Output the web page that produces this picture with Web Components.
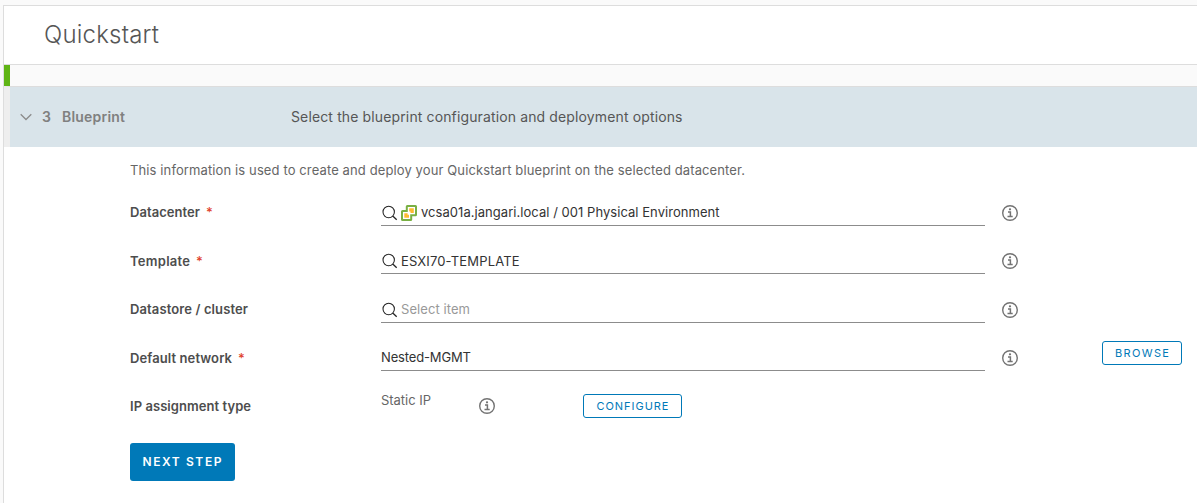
<!DOCTYPE html>
<html lang="en"><head><meta charset="utf-8"><title>Quickstart</title>
<style>
html,body{margin:0;height:100%;overflow:hidden}
body{background:#fafafa;font:13px/20px Inter,"Open Sans",sans-serif;color:#565656}
</style></head><body><quickstart-page></quickstart-page>
<script>
const define=(name,html,setup)=>customElements.define(name,class extends HTMLElement{
  connectedCallback(){
    if(this.shadowRoot)return;
    this.attachShadow({mode:'open'}).innerHTML=html;
    if(setup)setup.call(this,this.shadowRoot);
  }
});

// A line of text tracked out to the width in its "w" attribute.
define('fit-text',`<style>:host{display:inline-block;white-space:pre}span{display:inline-block}</style><span><slot></slot></span>`,function(root){
  const s=root.querySelector('span'),n=this.textContent.length,w=+this.getAttribute('w');
  s.style.letterSpacing='0px';
  const d=(w-s.getBoundingClientRect().width)/(n-1);
  s.style.letterSpacing=d.toFixed(3)+'px';
  s.style.marginRight=(-d).toFixed(3)+'px';
});

define('info-icon',`<style>:host{display:block;width:16px;height:16px}svg{display:block}</style>
<svg width="16" height="16" viewBox="0 0 16 16" fill="none" stroke="#737373"><circle cx="8" cy="8" r="7.3" stroke-width="1.4"/><path d="M6 7h2.400v4.500M5.500 11.600h5.200" stroke-width="1.500"/><circle cx="8" cy="4.300" r="1.150" fill="#737373" stroke="none"/></svg>`);

define('search-icon',`<style>:host{display:block;width:16px;height:16px;flex:none}svg{display:block}</style>
<svg width="16" height="16" viewBox="0 0 16 16" fill="none" stroke="#222"><circle cx="6.700" cy="7" r="5.700" stroke-width="1.050"/><path d="M11 11.300l3.700 3.500" stroke-width="1.300"/></svg>`);

define('vcenter-icon',`<style>:host{display:block;width:16px;height:16px;flex:none}svg{display:block}</style>
<svg width="16" height="16" viewBox="0 0 16 16"><path d="M6.300 0h8.200A1.500 1.500 0 0 1 16 1.500v8.200a1.500 1.500 0 0 1-1.500 1.500H11.200v3.300a1.500 1.500 0 0 1-1.500 1.500H1.500A1.500 1.500 0 0 1 0 14.500V6.500A1.500 1.500 0 0 1 1.500 5h3.300V1.500A1.500 1.500 0 0 1 6.300 0z" fill="#79b043"/><path d="M6.800 2H14V9.200H9.200V14H2V7h4.800z" fill="#fff"/><path d="M8.200 3.300H12.800v4.700H9.500V6.600H8.200zM3.300 8.300H6.600v1.400H8v3H3.300z" fill="#fdbb30"/></svg>`);

define('step-header',`<style>
:host{display:flex;height:61px;box-sizing:border-box;border-top:1px solid #ddd;border-left:6px solid #eee;background:#d9e4ea;align-items:center;font-size:14px}
svg{margin-left:10px;width:12px;height:8px;display:block}
.n{width:20px;margin-left:10px;font-weight:600;color:#808080}.t{width:229px;font-weight:600;color:#808080}.d{color:#565656}
</style><svg viewBox="0 0 12 8" fill="none" stroke="#8c8c8c" stroke-width="1.300"><path d="M.7 1.200 6 6.500 11.300 1.200"/></svg>
<span class="n"><slot name="number"></slot></span><span class="t"><slot name="title"></slot></span><span class="d"><slot></slot></span>`);

define('form-row',`<style>
:host{display:grid;grid-template-columns:251px 604px 16px 80px;column-gap:0;height:48px;align-items:start}
.label{font-weight:600;color:#4d4d4d;display:flex;gap:6px;padding-top:var(--label-y,0)}
.star{color:#e0412b;font-weight:500;display:none}:host([required]) .star{display:block}
.control{height:23px;border-bottom:1px solid #8c8c8c;display:flex;align-items:start;gap:4px;color:#333}
:host([placeholder]) .control{color:#999}
:host([plain]) .control{border:0;color:#666}
.info{margin:3px 0 0 17px}
.action{margin:-6px 0 0 101px}
:host([plain]) .info{display:none}
</style><div class="label"><slot name="label"></slot><span class="star">*</span></div><div class="control"><slot></slot></div><info-icon class="info"></info-icon><div class="action"><slot name="action"></slot></div>`);

define('outline-button',`<style>:host{display:block}button{box-sizing:border-box;width:var(--w);height:24px;padding:0;border:1px solid #0079b8;border-radius:3px;background:#fff;color:#0079b8;font:400 11px/22px Inter,sans-serif;display:block;text-align:center}</style><button><slot></slot></button>`);
define('primary-button',`<style>:host{display:block}button{width:105px;height:38px;padding:0 1px 0 0;border:0;border-radius:3px;background:#0079b8;color:#fff;font:600 12px/38px Inter,sans-serif;display:block}</style><button><slot></slot></button>`);

define('quickstart-page',`<style>
:host{display:block;height:503px;box-sizing:border-box;padding:5px 0 0 3px}
.panel{box-sizing:border-box;height:498px;border:solid #ddd;border-width:1px 0 0 1px;background:#fff}
header{height:58px;border-bottom:1px solid #ddd;padding-left:40px;font-size:24px;line-height:58px;font-weight:300}
.done{height:21px;border-left:6px solid #60b515;background:#fafafa}
main{padding:13px 0 0 126px}
.intro{height:20px;color:#666}
.rows{padding-top:22px}
search-icon{margin:3px 0 0 1px}vcenter-icon{margin:3px 0 0 -1px}
search-icon + fit-text{margin-left:-1px}
.low{padding-top:1px}
.static{margin-top:-5px;width:98px}.gap{margin:3px 0 0 -4px;width:96px}
.cfg{margin-top:-1px;margin-left:4px}
</style><div class="panel"><header><fit-text w="115">Quickstart</fit-text></header><div class="done"></div>
<step-header><span slot="number">3</span><fit-text slot="title" w="63">Blueprint</fit-text><fit-text w="391.500">Select the blueprint configuration and deployment options</fit-text></step-header>
<main><div class="intro"><fit-text w="615">This information is used to create and deploy your Quickstart blueprint on the selected datacenter.</fit-text></div>
<div class="rows">
<form-row required><fit-text slot="label" w="70">Datacenter</fit-text><search-icon></search-icon><vcenter-icon></vcenter-icon><fit-text w="298.500">vcsa01a.jangari.local / 001 Physical Environment</fit-text></form-row>
<form-row required style="--label-y:1px;height:49px"><fit-text slot="label" w="60">Template</fit-text><search-icon></search-icon><fit-text class="low" w="118.500">ESXI70-TEMPLATE</fit-text></form-row>
<form-row placeholder><fit-text slot="label" w="118">Datastore / cluster</fit-text><search-icon></search-icon><fit-text w="69">Select item</fit-text></form-row>
<form-row required style="--label-y:1px"><fit-text slot="label" w="102">Default network</fit-text><fit-text w="90">Nested-MGMT</fit-text><outline-button slot="action" style="--w:80px"><fit-text w="54">BROWSE</fit-text></outline-button></form-row>
<form-row plain style="--label-y:1px"><fit-text slot="label" w="121">IP assignment type</fit-text><fit-text class="static" w="50">Static IP</fit-text><info-icon class="gap"></info-icon><outline-button class="cfg" style="--w:99px"><fit-text w="72">CONFIGURE</fit-text></outline-button></form-row>
<primary-button><fit-text w="79">NEXT STEP</fit-text></primary-button>
</div></main></div>`);
</script></body></html>
